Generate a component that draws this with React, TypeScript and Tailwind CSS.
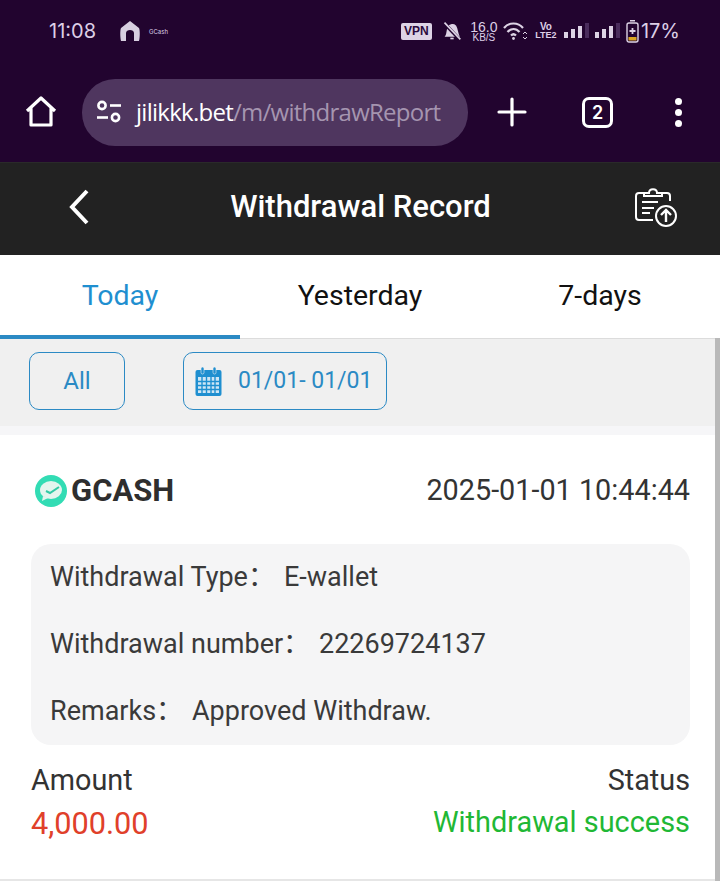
import React from "react";

const C = "#1f8fd0";

function Bars() {
  return (
    <svg width="26" height="18" viewBox="0 0 26 18" className="mr-[5px]"><rect x="0" y="10" width="4" height="6" fill="#ddd3e5" /><rect x="7" y="7" width="4" height="9" fill="#ddd3e5" /><rect x="14" y="4" width="4" height="12" fill="#ddd3e5" /><rect x="21" y="1" width="4" height="15" fill="#4a2c5c" /></svg>
  );
}

function StatusBar() {
  return (
    <div className="h-[62px] flex items-center justify-between pl-[49px] pr-[40px] text-[#ddcfe6] font-['Inter',sans-serif]">
      <div className="flex items-center">
        <span className="text-[20px] w-[70px]">11:08</span>
        <svg width="22" height="22" viewBox="0 0 22 22" className="mr-[8px]"><path d="M11 1 L20 8 C21 10 21 17 20 21 H15 V13 C15 9 7 9 7 13 V21 H2 C1 17 1 10 2 8 Z" fill="#d8cfe0" /></svg>
        <span className="text-[6px]">GCash</span>
      </div>
      <div className="flex items-center">
        <span className="bg-[#ddd3e5] text-[#2a0a3c] text-[12px] font-bold rounded-[2px] w-[31px] text-center h-[17px] leading-[17px] mr-[10px] font-['Liberation_Sans',sans-serif]">VPN</span>
        <svg width="20" height="20" viewBox="0 0 24 24" fill="none" stroke="#ddd3e5" strokeWidth="2" className="mr-[8px]"><path d="M5 18 C7 15 6 10 8 7 C10 4 14 4 16 6 C18 9 18 14 20 18 Z" fill="#ddd3e5" /><path d="M10 21h4" /><path d="M3 3 L21 22" stroke="#22042f" strokeWidth="4" /><path d="M3 2 L22 22" /></svg>
        <span className="flex flex-col items-center font-['Liberation_Sans',sans-serif] mr-[5px] w-[28px]"><span className="text-[14px] leading-[12px] font-medium">16.0</span><span className="text-[10px] leading-[9px]">KB/S</span></span>
        <svg width="24" height="20" viewBox="0 0 24 20" fill="none" stroke="#ddd3e5" strokeWidth="2.2" className="mr-[8px]"><path d="M1 7 C6 1 15 1 20 7" /><path d="M4.5 11 C8 7 13 7 16.5 11" /><path d="M8 14.5 C9.5 13 11.5 13 13 14.5" /><circle cx="10.5" cy="17.5" r="1.4" fill="#ddd3e5" stroke="none" /><path d="M20 13 l2 -2 l2 2 M20 16 l2 2 l2 -2" strokeWidth="1" /></svg>
        <span className="flex flex-col items-center text-[9px] font-bold mr-[7px] w-[22px] font-['Liberation_Sans',sans-serif]"><span className="text-[10px] leading-[9px]">Vo</span><span className="leading-[9px]">LTE2</span></span>
        <Bars />
        <Bars />
        <svg width="13" height="23" viewBox="0 0 13 23" className="mr-[2px]"><rect x="4" y="0" width="5" height="1.5" fill="#ddd3e5" /><rect x="1" y="3" width="11" height="19" rx="2" fill="none" stroke="#ddd3e5" strokeWidth="1.4" /><rect x="2.5" y="17" width="8" height="3.5" fill="#d9a520" /><path d="M6.5 8v6M3.5 11h6" stroke="#ddd3e5" strokeWidth="1.8" /></svg>
        <span className="text-[20px]">17%</span>
      </div>
    </div>
  );
}

function BrowserBar() {
  return (
    <div className="h-[100px] flex items-center">
      <svg width="34" height="34" viewBox="0 0 34 34" fill="none" stroke="white" strokeWidth="3.2" strokeLinejoin="round" className="ml-[24px]"><path d="M3 16 L17 3 L31 16 M7 13 V30 H27 V13" /></svg>
      <div className="ml-[24px] w-[386px] h-[67px] rounded-[33px] bg-[#4f365f] flex items-center pl-[13px] font-['Open_Sans',sans-serif] text-[24px] tracking-[-0.74px]">
        <svg width="28" height="28" viewBox="0 0 28 28" fill="none" stroke="white" strokeWidth="2.6" className="mr-[13px]"><circle cx="7" cy="7.5" r="3.6" /><path d="M15 7.5 H26" /><path d="M2 19.5 H13" /><circle cx="20.5" cy="19.5" r="3.6" /></svg>
        <span className="text-white">jilikkk.bet</span><span className="text-[#a595b0]">/m/withdrawReport</span>
      </div>
      <svg width="30" height="30" viewBox="0 0 30 30" stroke="white" strokeWidth="3.2" strokeLinecap="round" className="ml-[29px]"><path d="M15 2V28M2 15H28" /></svg>
      <div className="ml-[55px] w-[31px] h-[31px] border-[3px] border-white rounded-[7px] flex items-center justify-center text-white text-[18px] font-semibold font-['Inter',sans-serif]">2</div>
      <div className="ml-[62px] flex flex-col gap-[4px]">
        <span className="w-[7px] h-[7px] rounded-full bg-white" />
        <span className="w-[7px] h-[7px] rounded-full bg-white" />
        <span className="w-[7px] h-[7px] rounded-full bg-white" />
      </div>
    </div>
  );
}

function Header() {
  return (
    <div className="h-[93px] bg-[#222222] flex items-center justify-between pl-[66px] pr-[43px] pb-[4px] border-t border-[#2a2a2a]">
      <svg width="26" height="38" viewBox="0 0 26 38" fill="none" stroke="white" strokeWidth="4"><path d="M21 3 L6 19 L21 35" /></svg>
      <h1 className="text-white text-[31px] font-medium mr-[4px]">Withdrawal Record</h1>
      <svg width="44" height="40" viewBox="0 0 44 40" fill="none" stroke="white" strokeWidth="2"><path d="M10 6 H6 a3 3 0 0 0 -3 3 V30 a3 3 0 0 0 3 3 H20" /><path d="M30 6 H34 a3 3 0 0 1 3 3 V14" /><path d="M11 9 V6 H16 C16 1 24 1 24 6 H29 V9 Z" /><path d="M9 15H25M9 21H21M9 26H17" /><circle cx="33" cy="29" r="10" /><path d="M33 35V23M28 28L33 23L38 28" strokeWidth="2.4" /></svg>
    </div>
  );
}

function Tabs() {
  return (
    <div className="h-[84px] bg-white grid grid-cols-3 text-[28.5px] border-b border-[#dcdcdc]">
      <div className="flex items-center justify-center text-[#1f8fd0] border-b-[4px] border-[#2b8ac4] -mb-px pt-[2px]">Today</div>
      <div className="flex items-center justify-center text-[#111]">Yesterday</div>
      <div className="flex items-center justify-center text-[#111]">7-days</div>
    </div>
  );
}

function Filters() {
  return (
    <div className="h-[87px] bg-[#f0f0f0] pt-[13px] px-[29px] flex items-start">
      <div className="w-[96px] h-[58px] rounded-[10px] border border-[#2b8ac4] flex items-center justify-center text-[#2b8ac4] text-[24px]">All</div>
      <div className="ml-[58px] w-[204px] h-[58px] rounded-[10px] border border-[#2b8ac4] flex items-center pl-[11px] text-[#2b8ac4] text-[23px]">
        <svg width="27" height="30" viewBox="0 0 27 30" className="mr-[16px]">
          <rect x="0.5" y="4" width="26" height="26" rx="2" fill={C} />
          <rect x="6" y="1" width="3" height="7" rx="1.5" fill={C} stroke="#f0f0f0" strokeWidth="0.6" />
          <rect x="18" y="1" width="3" height="7" rx="1.5" fill={C} stroke="#f0f0f0" strokeWidth="0.6" />
          <rect x="3" y="11" width="21" height="16" fill="#cfe6f5" />
          <path d="M3 15.5H24M3 19.5H24M3 23.5H24M7 11V27M11.5 11V27M16 11V27M20 11V27" stroke={C} strokeWidth="1.4" />
        </svg>
        01/01- 01/01
      </div>
    </div>
  );
}

function Card() {
  return (
    <div className="bg-white border-t-[9px] border-t-[#f6f6f8] border-b-[2px] border-b-[#e6e6e6] h-[455px] pl-[31px] pr-[30px] pt-[32px] text-[#333]">
      <div className="flex items-center justify-between h-[48px]">
        <div className="flex items-center">
          <svg width="34" height="34" viewBox="0 0 34 34" className="ml-[3px] mr-[3px]">
            <circle cx="17" cy="17" r="16" fill="#32dcb4" />
            <ellipse cx="17" cy="16" rx="11" ry="9" fill="#e4f5ee" />
            <path d="M9 22 L8 27 L14 24 Z" fill="#e4f5ee" />
            <path d="M12 17 L16 19 L25 13" fill="none" stroke="#32c9a4" strokeWidth="2" />
          </svg>
          <span className="text-[31px] font-bold text-[#2e2e2e]">GCASH</span>
        </div>
        <span className="text-[28.8px]">2025-01-01 10:44:44</span>
      </div>
      <div className="mt-[29px] h-[201px] bg-[#f5f5f6] rounded-[20px] pl-[19px] pr-[20px] pt-[13px] text-[27px] text-[#3a3a3a] flex flex-col gap-[27px] font-['Roboto','Noto_Sans_CJK_SC',sans-serif]">
        <div className="h-[40px] flex items-center"><span className="w-[234px]">Withdrawal Type：</span><span>E-wallet</span></div>
        <div className="h-[40px] flex items-center"><span className="w-[269px]">Withdrawal number：</span><span>22269724137</span></div>
        <div className="h-[40px] flex items-center"><span className="w-[142px]">Remarks：</span><span>Approved Withdraw.</span></div>
      </div>
      <div className="flex justify-between mt-[13px]">
        <div className="flex flex-col">
          <span className="text-[28.8px] leading-[44px]">Amount</span>
          <span className="text-[30.7px] leading-[44px] text-[#e0402a]">4,000.00</span>
        </div>
        <div className="flex flex-col items-end">
          <span className="text-[28.8px] leading-[44px]">Status</span>
          <span className="text-[28.9px] leading-[40px] text-[#1fb835]">Withdrawal success</span>
        </div>
      </div>
    </div>
  );
}

export default function App() {
  return (
    <div className="relative w-[720px] h-[881px] overflow-hidden bg-white font-['Roboto',sans-serif]">
      <div className="bg-[#22042f]">
        <StatusBar />
        <BrowserBar />
      </div>
      <Header />
      <Tabs />
      <Filters />
      <Card />
      <div className="absolute right-0 top-[338px] bottom-0 w-[5px] bg-[#b9b9b9]" />
    </div>
  );
}
